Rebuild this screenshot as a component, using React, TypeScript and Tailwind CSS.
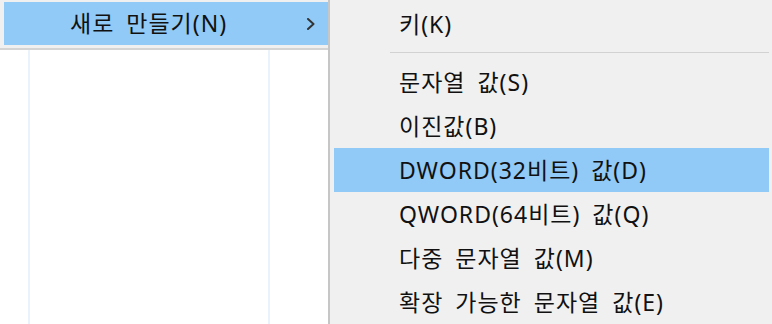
import React from 'react';

const font = { fontFamily: '"Noto Sans", "Noto Sans CJK KR", sans-serif' };

type Item = { label: string; active?: boolean } | { separator: true };

const items: Item[] = [
  { label: '키(K)' },
  { separator: true },
  { label: '문자열 값(S)' },
  { label: '이진값(B)' },
  { label: 'DWORD(32비트) 값(D)', active: true },
  { label: 'QWORD(64비트) 값(Q)' },
  { label: '다중 문자열 값(M)' },
  { label: '확장 가능한 문자열 값(E)' },
];

function Chevron() {
  return (
    <svg width="10" height="12" viewBox="0 0 10 12" fill="none">
      <path d="M2 1 L7.5 6 L2 11" stroke="#333" strokeWidth="2" strokeLinecap="round" strokeLinejoin="round" />
    </svg>
  );
}

export default function App() {
  return (
    <div
      className="w-[772px] h-[324px] flex overflow-hidden bg-white text-[23px] tracking-[1px] [word-spacing:5px] text-[#111]"
      style={font}
    >
      {/* Parent context menu (bottom part) */}
      <div className="w-[328px] flex flex-col">
        <div className="bg-[#f0f0f0] pt-[2px] pl-[4px] h-[50px] border-b-2 border-[#d4d4d4]">
          <div className="h-[43px] bg-[#91c9f7] flex items-center pl-[66px] pr-[12px]">
            <span className="flex-1 leading-none">새로 만들기(N)</span>
            <Chevron />
          </div>
        </div>
        {/* List view beneath */}
        <div className="flex-1 flex">
          <div className="w-[28px]" />
          <div className="w-[240px] border-l-2 border-[#eaf3fc]" />
          <div className="flex-1 border-l-2 border-[#eaf3fc]" />
        </div>
      </div>

      {/* Submenu */}
      <div className="flex-1 bg-[#f0f0f0] border-l-2 border-[#c6c6c6] pt-[2px] pl-[4px] pr-[3px]">
        {items.map((it, i) =>
          'separator' in it ? (
            <div key={i} className="h-[14px] pt-[6px] pl-[56px]">
              <div className="h-px bg-[#d2d2d2]" />
            </div>
          ) : (
            <div
              key={i}
              className={`h-[44px] flex items-center pl-[65px] leading-none ${it.active ? 'bg-[#91c9f7]' : ''}`}
            >
              {it.label}
            </div>
          )
        )}
      </div>
    </div>
  );
}
